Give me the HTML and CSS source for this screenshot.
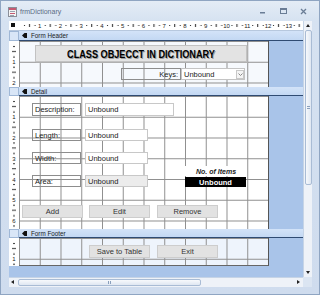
FILE: index.html
```html
<!DOCTYPE html>
<html>
<head>
<meta charset="utf-8">
<link rel="stylesheet" href="styles.css">
</head>
<body>
<div class="window">
  <div class="titlebar">
    <svg class="appicon" width="9" height="10" viewBox="0 0 9 10">
      <rect x="0.5" y="0.5" width="8" height="9" fill="#f4f4f4" stroke="#8a8f99"/>
      <rect x="1" y="1" width="7" height="2" fill="#c65a72"/>
      <rect x="2" y="4" width="5" height="1" fill="#9aa3b0"/>
      <rect x="2" y="6" width="5" height="1" fill="#c65a72"/>
      <rect x="2" y="8" width="4" height="1" fill="#9aa3b0"/>
    </svg>
    <span class="title">frmDictionary</span>
    <div class="winbtns">
      <span class="wbtn"><svg width="6" height="6" viewBox="0 0 6 6"><rect x="0" y="4" width="5" height="1.5" fill="#6a7d96"/></svg></span>
      <span class="wbtn"><svg width="7" height="6" viewBox="0 0 7 6"><rect x="0.5" y="0.5" width="6" height="5" fill="none" stroke="#6a7d96"/><rect x="0.5" y="0.5" width="6" height="1.5" fill="#6a7d96"/></svg></span>
      <span class="wbtn"><svg width="7" height="7" viewBox="0 0 7 7"><path d="M1 1 L6 6 M6 1 L1 6" stroke="#6a7d96" stroke-width="1.3"/></svg></span>
    </div>
  </div>
  <div class="client">
    <div class="corner"><span class="sq"></span></div>
    <div class="hruler">
      <svg width="284" height="10" viewBox="0 0 284 10">
        <defs>
          <pattern id="hrp" width="20.75" height="10" patternUnits="userSpaceOnUse">
            <rect x="5" y="4" width="1" height="1" fill="#222"/>
            <rect x="10" y="3" width="1" height="3" fill="#222"/>
            <rect x="15.5" y="4" width="1" height="1" fill="#222"/>
          </pattern>
        </defs>
        <rect width="284" height="10" fill="url(#hrp)"/>
        <g class="rnum" text-anchor="middle">
          <text x="20.75" y="7">1</text><text x="41.5" y="7">2</text><text x="62.25" y="7">3</text>
          <text x="83" y="7">4</text><text x="103.75" y="7">5</text><text x="124.5" y="7">6</text>
          <text x="145.25" y="7">7</text><text x="166" y="7">8</text><text x="186.75" y="7">9</text>
          <text x="207.5" y="7">10</text><text x="228.25" y="7">11</text><text x="249" y="7">12</text>
          <text x="269.75" y="7">13</text>
        </g>
      </svg>
    </div>
    <div class="vscroll">
      <span class="arr up"></span>
      <div class="vtrack"><div class="vthumb"><span class="grip-h"></span></div></div>
      <span class="arr down"></span>
    </div>

    <div class="sel"></div>
    <div class="bar"><svg class="bicon" width="5" height="5" viewBox="0 0 5 5"><path d="M0 2.5 L2.5 0 L5 0 L5 5 L2.5 5 Z" fill="#111"/></svg>Form Header</div>

    <div class="vr">
      <svg width="10" height="46" viewBox="0 0 10 46">
        <rect width="10" height="46" fill="url(#vrp)"/>
        <g class="rnum" text-anchor="middle"><text x="5" y="23">1</text><text x="5" y="44">2</text></g>
      </svg>
    </div>
    <div class="section hdr">
      <div class="canvas">
        <div class="ctl titlebox"><span class="ttext">CLASS OBJECCT IN DICTIONARY</span></div>
        <div class="ctl lbl keys">Keys:</div>
        <div class="ctl combo"><span class="ctext">Unbound</span><span class="drop"><svg width="5" height="3" viewBox="0 0 5 3"><path d="M0.5 0.5 L2.5 2.5 L4.5 0.5" fill="none" stroke="#888"/></svg></span></div>
      </div>
      <div class="fill"></div>
    </div>

    <div class="sel"></div>
    <div class="bar"><svg class="bicon" width="5" height="5" viewBox="0 0 5 5"><path d="M0 2.5 L2.5 0 L5 0 L5 5 L2.5 5 Z" fill="#111"/></svg>Detail</div>

    <div class="vr">
      <svg width="10" height="133" viewBox="0 0 10 133">
        <defs>
          <pattern id="vrp" width="10" height="20.75" patternUnits="userSpaceOnUse">
            <rect x="4" y="5" width="2" height="1" fill="#333"/>
            <rect x="3" y="10" width="4" height="1" fill="#333"/>
            <rect x="4" y="15.5" width="2" height="1" fill="#333"/>
          </pattern>
        </defs>
        <rect width="10" height="133" fill="url(#vrp)"/>
        <g class="rnum" text-anchor="middle">
          <text x="5" y="23">1</text><text x="5" y="44">2</text><text x="5" y="64.5">3</text>
          <text x="5" y="85.5">4</text><text x="5" y="106">5</text><text x="5" y="127">6</text>
        </g>
      </svg>
    </div>
    <div class="section det">
      <div class="canvas">
        <div class="ctl lbl r1">Description:</div>
        <div class="ctl txt r1 wide">Unbound</div>
        <div class="ctl lbl r2">Length:</div>
        <div class="ctl txt r2">Unbound</div>
        <div class="ctl lbl r3">Width:</div>
        <div class="ctl txt r3">Unbound</div>
        <div class="ctl lbl r4">Area:</div>
        <div class="ctl txt r4 gray">Unbound</div>
        <div class="ctl items">No. of Items</div>
        <div class="ctl count">Unbound</div>
        <div class="ctl btn b1">Add</div>
        <div class="ctl btn b2">Edit</div>
        <div class="ctl btn b3">Remove</div>
      </div>
      <div class="fill"></div>
    </div>

    <div class="sel"></div>
    <div class="bar"><svg class="bicon" width="5" height="5" viewBox="0 0 5 5"><path d="M0 2.5 L2.5 0 L5 0 L5 5 L2.5 5 Z" fill="#111"/></svg>Form Footer</div>

    <div class="vr">
      <svg width="10" height="28" viewBox="0 0 10 28">
        <rect width="10" height="28" fill="url(#vrp)"/>
        <g class="rnum" text-anchor="middle"><text x="5" y="23">1</text></g>
      </svg>
    </div>
    <div class="section ftr">
      <div class="canvas">
        <div class="ctl btn f1">Save to Table</div>
        <div class="ctl btn f2">Exit</div>
      </div>
      <div class="fill"></div>
    </div>

    <div class="blank"></div>
    <div class="hscroll">
      <span class="arr left"></span>
      <div class="htrack"><div class="hthumb"><span class="grip-v"></span></div></div>
      <span class="arr right"></span>
    </div>
    <div class="sbcorner"></div>
  </div>
</div>
</body>
</html>
```

FILE: styles.css
```css
html, body {
  margin: 0;
  padding: 0;
}
body {
  width: 320px;
  height: 295px;
  overflow: hidden;
  font-family: "Liberation Sans", Arial, sans-serif;
  background: #d4e0ef;
}
.window {
  box-sizing: border-box;
  width: 320px;
  height: 295px;
  border: 1px solid #8fa5c2;
  background: linear-gradient(#e4ecf6, #d6e2f1 20px, #cfdcee);
  padding: 0 7px 7px 8px;
  display: flex;
  flex-direction: column;
}
.titlebar {
  height: 20px;
  flex: none;
  display: flex;
  align-items: center;
}
.appicon {
  margin-left: -1px;
  margin-top: 1px;
  flex: none;
}
.title {
  margin-left: 3px;
  font-size: 7px;
  color: #5b6c84;
}
.winbtns {
  margin-left: auto;
  display: flex;
  margin-right: -1px;
}
.wbtn {
  width: 20px;
  height: 14px;
  display: flex;
  align-items: center;
  justify-content: center;
}
.client {
  display: grid;
  grid-template-columns: 10px 284px 9px;
  grid-template-rows: 10px 10px 46px 9px 133px 9px 28px 11px 10px;
  background: #a9c4e9;
}
.corner {
  grid-column: 1;
  background: #fff;
  border-bottom: 1px solid #b7c8de;
  box-sizing: border-box;
  position: relative;
}
.corner .sq {
  position: absolute;
  left: 2px;
  top: 2px;
  width: 4px;
  height: 4px;
  background: #111;
}
.hruler {
  grid-column: 2;
  background: #fff;
  border-bottom: 1px solid #b7c8de;
  box-sizing: border-box;
  overflow: hidden;
}
.hruler svg, .vr svg {
  display: block;
}
.rnum {
  font-family: "Liberation Sans", Arial, sans-serif;
  font-size: 6px;
  fill: #222;
}
.vscroll {
  grid-column: 3;
  grid-row: 1 / span 8;
  background: #eef2f8;
  border-left: 1px solid #c6d4e6;
  box-sizing: border-box;
  display: flex;
  flex-direction: column;
  align-items: center;
}
.vtrack {
  flex: 1;
  width: 100%;
  position: relative;
}
.vthumb {
  margin: 0 auto;
  width: 7px;
  height: 155px;
  box-sizing: border-box;
  border: 1px solid #a9bcd5;
  border-radius: 2px;
  background: linear-gradient(to right, #f7f9fc, #dfe7f2);
  display: flex;
  align-items: center;
  justify-content: center;
}
.grip-h {
  width: 3px;
  height: 3px;
  border-top: 1px solid #8aa0bd;
  border-bottom: 1px solid #8aa0bd;
  box-sizing: border-box;
}
.arr {
  flex: none;
  width: 8px;
  height: 9px;
  position: relative;
}
.arr::after {
  content: "";
  position: absolute;
  width: 0;
  height: 0;
  border: 2.5px solid transparent;
}
.arr.up::after {
  left: 1.5px;
  top: 1px;
  border-bottom: 3px solid #222;
}
.arr.down::after {
  left: 1.5px;
  top: 3px;
  border-top: 3px solid #222;
}
.hscroll {
  grid-column: 1 / span 2;
  background: #eef2f8;
  border-top: 1px solid #c6d4e6;
  box-sizing: border-box;
  display: flex;
  align-items: center;
}
.htrack {
  flex: 1;
  height: 100%;
  display: flex;
  align-items: center;
}
.hthumb {
  width: 183px;
  height: 7px;
  box-sizing: border-box;
  border: 1px solid #a9bcd5;
  border-radius: 2px;
  background: linear-gradient(#f7f9fc, #dfe7f2);
  display: flex;
  align-items: center;
  justify-content: center;
}
.grip-v {
  width: 3px;
  height: 3px;
  border-left: 1px solid #8aa0bd;
  border-right: 1px solid #8aa0bd;
  box-sizing: border-box;
}
.arr.left, .arr.right {
  width: 9px;
  height: 8px;
}
.arr.left::after {
  top: 1.5px;
  left: 0px;
  border-right: 3px solid #222;
}
.arr.right::after {
  top: 1.5px;
  left: 3px;
  border-left: 3px solid #222;
}
.sbcorner {
  grid-column: 3;
  background: #dbe5f2;
}
.sel {
  grid-column: 1;
  background: #d9e6f7;
  border: 1px solid #9fb7d6;
  box-sizing: border-box;
}
.bar {
  grid-column: 2;
  background: linear-gradient(#d3e3f8, #c3d8f3);
  border-bottom: 1px solid #2f4b72;
  box-sizing: border-box;
  display: flex;
  align-items: center;
  font-size: 6.3px;
  color: #1a1a1a;
  padding-left: 3px;
}
.bicon {
  margin-right: 4px;
  flex: none;
}
.vr {
  grid-column: 1;
  background: #fff;
  overflow: hidden;
}
.section {
  grid-column: 2;
  display: flex;
  overflow: hidden;
}
.canvas {
  position: relative;
  width: 250px;
  box-sizing: border-box;
  border-right: 1px solid #555;
  flex: none;
  background-color: #fff;
  background-image:
    linear-gradient(to right, #8f8f8f 1px, transparent 1px),
    linear-gradient(to bottom, #8f8f8f 1px, transparent 1px);
  background-size: 20.75px 20.75px;
}
.hdr .canvas {
  background-color: #f6f9fd;
}
.ftr .canvas {
  background-color: #eef4fc;
  border-bottom: 1px solid #666;
}
.fill {
  flex: 1;
  background: #a9c4e9;
}
.ctl {
  position: absolute;
  box-sizing: border-box;
  display: flex;
  align-items: center;
  font-size: 7.5px;
  color: #222;
  white-space: nowrap;
  overflow: hidden;
}
.titlebox {
  left: 16px;
  top: 4px;
  width: 212px;
  height: 17px;
  justify-content: center;
  background: #e3e3e3;
  border: 1px solid #c2c2c2;
  box-shadow: 1px 1px 0 #b0b0b0;
}
.ttext {
  display: inline-block;
  font-family: "Liberation Sans", Arial, sans-serif;
  font-weight: bold;
  font-size: 10.5px;
  color: #000;
  text-shadow: 1px 1px 0 #9c9c9c;
  transform: scaleX(0.87);
}
.keys {
  left: 102px;
  top: 27px;
  width: 60px;
  height: 12px;
  justify-content: flex-end;
  padding-right: 2px;
}
.combo {
  left: 162px;
  top: 27px;
  width: 64px;
  height: 12px;
  background: #fff;
  border: 1px solid #c4c4c4;
  padding-left: 2px;
}
.ctext {
  flex: 1;
}
.drop {
  width: 8px;
  height: 9px;
  border: 1px solid #c8c8c8;
  box-sizing: border-box;
  display: flex;
  align-items: center;
  justify-content: center;
  background: #f4f4f4;
}
.lbl {
  border: 1px solid #8d8d8d;
  padding-left: 2px;
}
.txt {
  background: #fff;
  border: 1px solid #c8c8c8;
  padding-left: 2px;
  left: 66px;
  width: 63px;
}
.txt.wide {
  width: 89px;
}
.txt.gray {
  background: #ececec;
}
.lbl.r1, .lbl.r2, .lbl.r3, .lbl.r4 {
  left: 13px;
  width: 49px;
}
.r1 { top: 7px; height: 13px; }
.r2 { top: 33px; height: 12px; }
.r3 { top: 56px; height: 12px; }
.r4 { top: 79px; height: 12px; }
.items {
  left: 166px;
  top: 70px;
  width: 62px;
  height: 10px;
  background: #fff;
  justify-content: center;
  font-weight: bold;
  font-style: italic;
  font-size: 7px;
}
.count {
  left: 166px;
  top: 81px;
  width: 61px;
  height: 10px;
  background: #000;
  color: #fff;
  justify-content: center;
  font-weight: bold;
}
.btn {
  top: 109px;
  width: 61px;
  height: 13px;
  background: #e2e2e2;
  border: 1px solid #cdcdcd;
  justify-content: center;
  color: #333;
}
.b1 { left: 3px; }
.b2 { left: 70px; }
.b3 { left: 138px; }
.f1, .f2 { top: 7px; }
.f1 { left: 70px; }
.f2 { left: 138px; }
.blank {
  grid-column: 1 / span 2;
  background: #a9c4e9;
}
```
